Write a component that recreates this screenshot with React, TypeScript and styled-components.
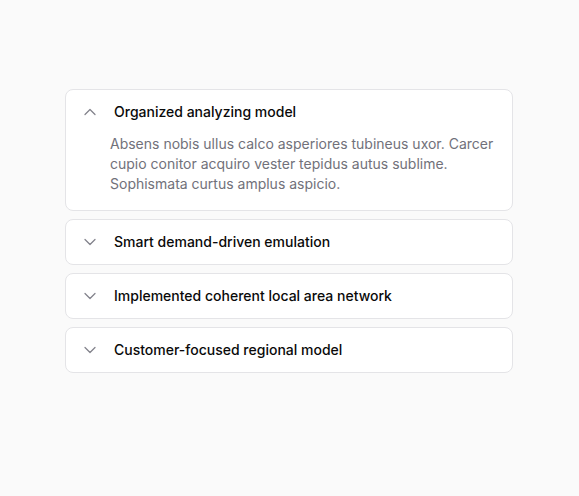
import { useState } from "react";
import styled, { createGlobalStyle } from "styled-components";
import { ChevronDown } from "lucide-react";

const GlobalStyle = createGlobalStyle`
  html, body {
    margin: 0;
    padding: 0;
    background-color: #fafafa;
  }
  body {
    font-family: Inter, "Noto Sans", sans-serif;
  }
`;

const Page = styled.div`
  min-height: 496px;
  padding: 89px 1px 0 0;
  box-sizing: border-box;
`;

const List = styled.div`
  display: flex;
  flex-direction: column;
  gap: 8px;
  width: 448px;
  margin: 0 auto;
`;

const Item = styled.div`
  background-color: #ffffff;
  border: 1px solid #e4e4e7;
  border-radius: 8px;
  overflow: hidden;
`;

const Trigger = styled.button`
  display: flex;
  align-items: center;
  gap: 14px;
  width: 100%;
  padding: 12px 14px;
  border: none;
  background: transparent;
  font-family: inherit;
  font-size: 14px;
  font-weight: 500;
  line-height: 20px;
  color: #0a0a0a;
  text-align: left;
  cursor: pointer;
`;

const Icon = styled(ChevronDown)<{ $open: boolean }>`
  flex-shrink: 0;
  color: #83838c;
  transform: ${(p) => (p.$open ? "rotate(180deg)" : "none")};
`;

const Content = styled.div`
  padding: 0 16px 16px 44px;
  font-size: 14px;
  line-height: 20px;
  color: #71717a;
`;

const items = [
  {
    title: "Organized analyzing model",
    body: "Absens nobis ullus calco asperiores tubineus uxor. Carcer cupio conitor acquiro vester tepidus autus sublime. Sophismata curtus amplus aspicio.",
  },
  {
    title: "Smart demand-driven emulation",
    body: "Vorago cur tergo sollers cubicularis. Cognomen debeo vitae.",
  },
  {
    title: "Implemented coherent local area network",
    body: "Umbra curo comparo arbustum textor acies careo.",
  },
  {
    title: "Customer-focused regional model",
    body: "Tam cinis vaco adeo suscipit thesaurus.",
  },
];

function App() {
  const [open, setOpen] = useState<number | null>(0);

  return (
    <Page>
      <GlobalStyle />
      <List>
        {items.map((item, i) => (
          <Item key={item.title}>
            <Trigger onClick={() => setOpen(open === i ? null : i)}>
              <Icon size={20} strokeWidth={1.5} $open={open === i} />
              {item.title}
            </Trigger>
            {open === i && <Content>{item.body}</Content>}
          </Item>
        ))}
      </List>
    </Page>
  );
}

export default App;
